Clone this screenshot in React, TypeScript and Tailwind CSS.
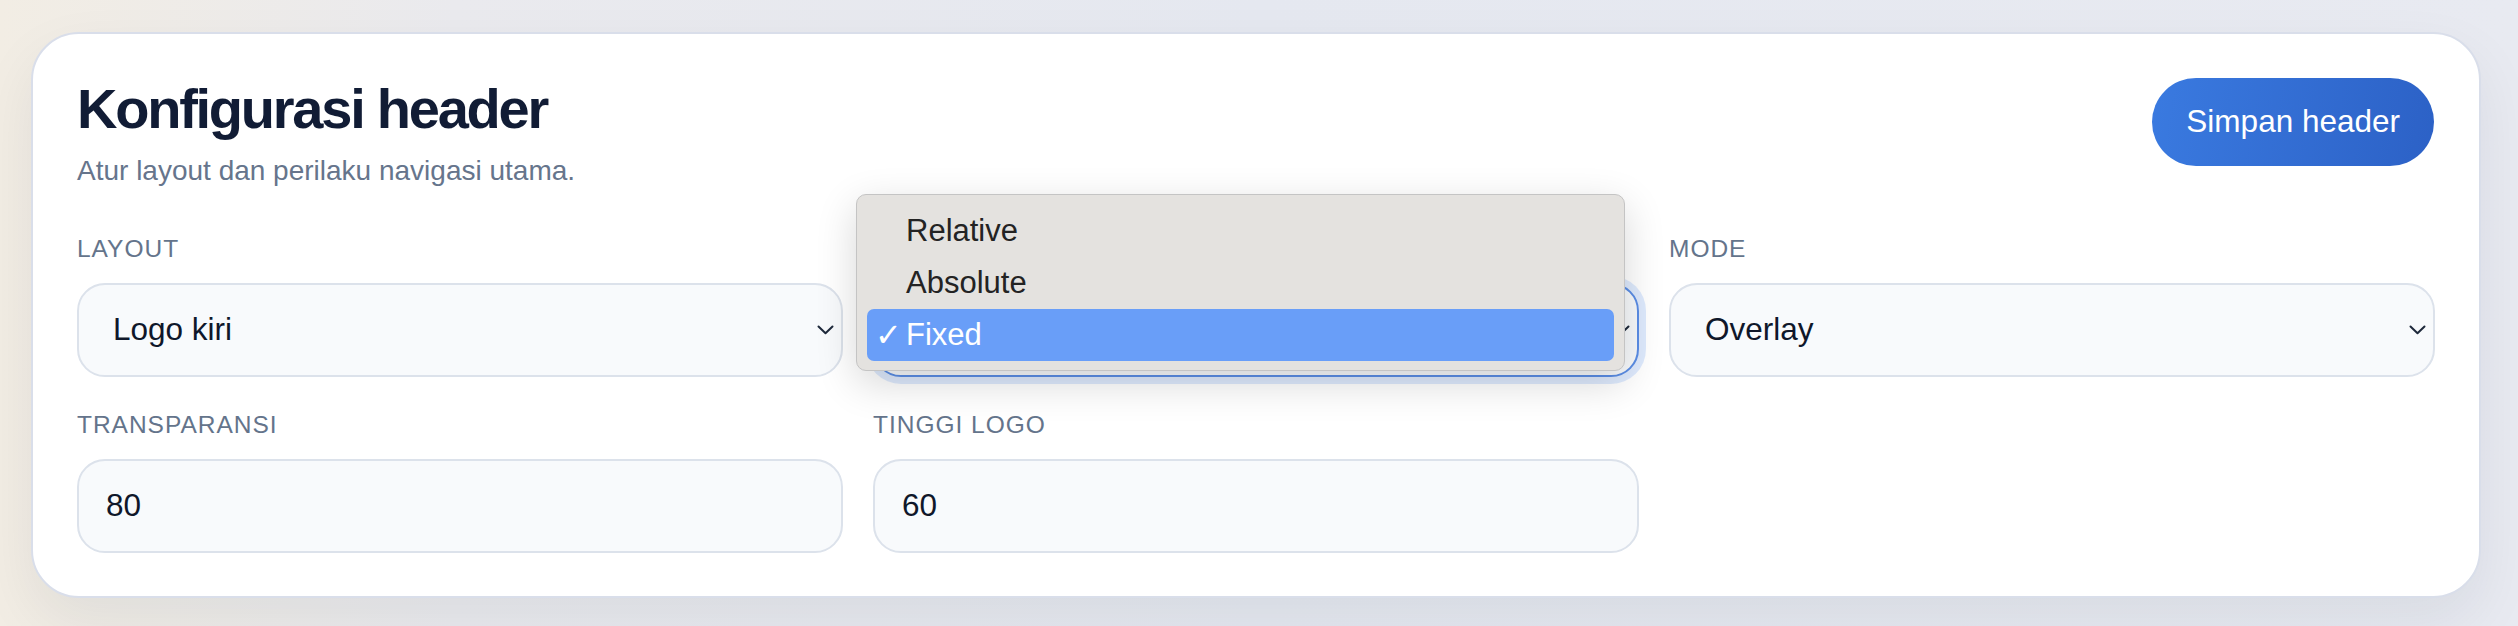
import React from 'react';

const Chevron = () => (
  <svg width="17" height="10" viewBox="0 0 17 10" fill="none">
    <path d="M1.5 1.5 L8.5 8.3 L15.5 1.5" stroke="#1e293b" strokeWidth="2" strokeLinecap="round" strokeLinejoin="round" />
  </svg>
);

const Label = ({ children }: { children: React.ReactNode }) => (
  <span className="text-[24.5px] leading-[35px] tracking-[0.04em] uppercase text-[#64748b]">{children}</span>
);

const SelectBox = ({ value, focused = false }: { value: string; focused?: boolean }) => (
  <div
    className={`h-[94px] rounded-[28px] border-2 bg-[#f8fafc] pl-[34px] pr-[7px] flex items-center justify-between ${
      focused ? 'border-[#5b8ee6] shadow-[0_0_0_7px_rgba(59,130,246,0.17)]' : 'border-[#dce2eb]'
    }`}
  >
    <span className="text-[31.5px] text-[#0f172a]">{value}</span>
    <Chevron />
  </div>
);

const InputBox = ({ value }: { value: string }) => (
  <div className="h-[94px] rounded-[28px] border-2 border-[#dce2eb] bg-[#f8fafc] pl-[27px] flex items-center">
    <span className="text-[31.5px] text-[#0f172a]">{value}</span>
  </div>
);

const options = ['Relative', 'Absolute', 'Fixed'];

export default function App() {
  const selected = 'Fixed';

  return (
    <div className="w-full h-[626px] overflow-hidden pt-[32px] font-['Liberation_Sans',Arial,sans-serif] bg-[linear-gradient(90deg,#f2ede4_0%,#eaeaee_18%,#e5e8f0_50%,#e8eaf1_100%)]">
      <div className="ml-[31px] w-[2450px] rounded-[48px] border-2 border-[#d9deea] bg-white px-[44px] pt-[44px] pb-[43px] shadow-[0_24px_60px_rgba(15,23,42,0.07)]">
        {/* header */}
        <div className="flex items-start justify-between">
          <div className="flex flex-col">
            <h1 className="text-[56px] font-bold leading-[1.1] tracking-[-0.04em] text-[#111c35]">Konfigurasi header</h1>
            <p className="mt-[10px] text-[28px] leading-[42px] text-[#66758c]">Atur layout dan perilaku navigasi utama.</p>
          </div>
          <button className="h-[88px] px-[34px] rounded-full bg-[linear-gradient(100deg,#3a7ae0,#2c61c6)] text-white text-[31.5px] font-medium mr-[1px]">
            Simpan header
          </button>
        </div>

        {/* fields */}
        <div className="mt-[39px] grid grid-cols-3 gap-x-[30px] gap-y-[30px]">
          <div className="flex flex-col gap-[17px]">
            <Label>Layout</Label>
            <SelectBox value="Logo kiri" />
          </div>

          <div className="relative flex flex-col gap-[17px]">
            <Label>Posisi</Label>
            <SelectBox value="Fixed" focused />

            {/* open native menu */}
            <div className="absolute z-10 left-[-17px] top-[-37px] w-[769px] h-[177px] rounded-[10px] border border-[#c4c4c4] bg-[#e4e2df] pt-[11px] px-[10px] shadow-[0_12px_40px_rgba(0,0,0,0.16)]">
              {options.map((o) => {
                const active = o === selected;
                return (
                  <div
                    key={o}
                    className={`h-[51.7px] flex items-center rounded-[7px] ${active ? 'bg-[#699ef8] text-white' : 'text-[#232323]'}`}
                  >
                    <span className="w-[39px] pl-[8px] text-[32px] leading-none font-['DejaVu_Sans',sans-serif]">{active ? '✓' : ''}</span>
                    <span className="text-[31px]">{o}</span>
                  </div>
                );
              })}
            </div>
          </div>

          <div className="flex flex-col gap-[17px]">
            <Label>Mode</Label>
            <SelectBox value="Overlay" />
          </div>

          <div className="flex flex-col gap-[17px]">
            <Label>Transparansi</Label>
            <InputBox value="80" />
          </div>

          <div className="flex flex-col gap-[17px]">
            <Label>Tinggi logo</Label>
            <InputBox value="60" />
          </div>
        </div>
      </div>
    </div>
  );
}
